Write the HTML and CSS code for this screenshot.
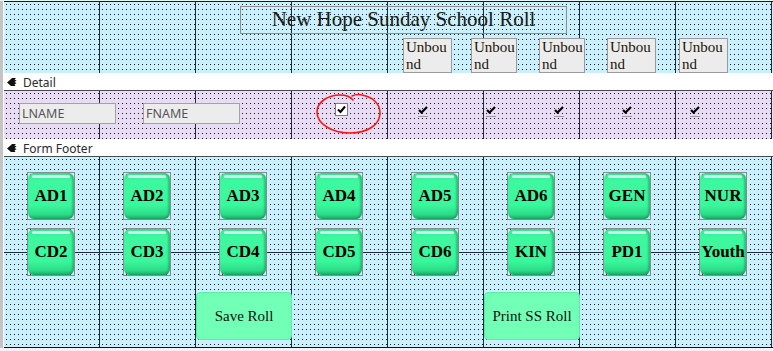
FILE: index.html
```html
<!DOCTYPE html>
<html lang="en">
<head>
    <meta charset="UTF-8">
    <meta name="viewport" content="width=device-width, initial-scale=1.0">
    <title>New Hope Sunday School Roll - Design View</title>
    <link rel="stylesheet" href="styles.css">
</head>
<body>
    <div class="form">
        <section class="sec header">
            <div class="title">New Hope Sunday School Roll</div>
            <div class="unbound-row">
                <div class="unbound">Unbound</div>
                <div class="unbound narrow">Unbound</div>
                <div class="unbound narrow">Unbound</div>
                <div class="unbound">Unbound</div>
                <div class="unbound last">Unbound</div>
            </div>
        </section>

        <div class="bar">
            <svg class="bar-icon" width="10" height="9" viewBox="0 0 10 9"><path d="M0 4.5 L4 1 L5 0 L9 0 L7.5 1.5 L9.5 2.5 L7.5 4 L9.5 5 L7.5 6.5 L8.5 8 L4 8 Z" fill="#111"/></svg>
            <span>Detail</span>
        </div>

        <section class="sec detail">
            <div class="field lname">LNAME</div>
            <div class="field fname">FNAME</div>
            <div class="checkbox">
                <svg width="11" height="11" viewBox="0 0 11 11"><path d="M2 5.5 L4.5 8 L9 2.5" fill="none" stroke="#000" stroke-width="2"/></svg>
            </div>
            <div class="checks">
                <div class="check"><svg width="10" height="8" viewBox="0 0 10 8"><path d="M1 4 L3.5 6.5 L9 1" fill="none" stroke="#000" stroke-width="2.2"/></svg></div>
                <div class="check"><svg width="10" height="8" viewBox="0 0 10 8"><path d="M1 4 L3.5 6.5 L9 1" fill="none" stroke="#000" stroke-width="2.2"/></svg></div>
                <div class="check"><svg width="10" height="8" viewBox="0 0 10 8"><path d="M1 4 L3.5 6.5 L9 1" fill="none" stroke="#000" stroke-width="2.2"/></svg></div>
                <div class="check"><svg width="10" height="8" viewBox="0 0 10 8"><path d="M1 4 L3.5 6.5 L9 1" fill="none" stroke="#000" stroke-width="2.2"/></svg></div>
                <div class="check"><svg width="10" height="8" viewBox="0 0 10 8"><path d="M1 4 L3.5 6.5 L9 1" fill="none" stroke="#000" stroke-width="2.2"/></svg></div>
            </div>
            <svg class="scribble" width="74" height="46" viewBox="0 0 74 46">
                <path d="M41 9 C38 5 34 4 28 4 C16 4 5 11 5 21 C5 33 20 42 38 42 C55 42 68 34 68 22 C68 12 60 6 50 4 C46 3 42 4 40 5" fill="none" stroke="#ff1414" stroke-width="1.6" stroke-linecap="round"/>
            </svg>
        </section>

        <div class="bar">
            <svg class="bar-icon" width="10" height="9" viewBox="0 0 10 9"><path d="M0 4.5 L4 1 L5 0 L9 0 L7.5 1.5 L9.5 2.5 L7.5 4 L9.5 5 L7.5 6.5 L8.5 8 L4 8 Z" fill="#111"/></svg>
            <span>Form Footer</span>
        </div>

        <section class="sec footer">
            <button class="btn"><span>AD1</span></button>
            <button class="btn"><span>AD2</span></button>
            <button class="btn"><span>AD3</span></button>
            <button class="btn"><span>AD4</span></button>
            <button class="btn"><span>AD5</span></button>
            <button class="btn"><span>AD6</span></button>
            <button class="btn"><span>GEN</span></button>
            <button class="btn"><span>NUR</span></button>
            <button class="btn"><span>CD2</span></button>
            <button class="btn"><span>CD3</span></button>
            <button class="btn"><span>CD4</span></button>
            <button class="btn"><span>CD5</span></button>
            <button class="btn"><span>CD6</span></button>
            <button class="btn"><span>KIN</span></button>
            <button class="btn"><span>PD1</span></button>
            <button class="btn"><span>Youth</span></button>
            <button class="cmd save">Save Roll</button>
            <button class="cmd print">Print SS Roll</button>
        </section>
    </div>
</body>
</html>
```

FILE: styles.css
```css
* {
    margin: 0;
    padding: 0;
    box-sizing: border-box;
}
body {
    width: 773px;
    height: 351px;
    overflow: hidden;
    background: #eef3f7;
    font-family: 'Liberation Serif', serif;
    color: #111;
}
.form {
    margin-top: 1px;
    border-left: 3px solid #c4c4c4;
    padding-left: 1px;
    background: #fff;
}

/* design surface: dots + inch lines */
.sec {
    position: relative;
    background-color: #c9f0fc;
    background-image:
        linear-gradient(to right, transparent 95px, #1d2c3a 95px),
        linear-gradient(to bottom, transparent 95px, #1d2c3a 95px),
        conic-gradient(at 1px 1px, transparent 75%, #1a1a1a 0);
    background-size: 96px 100%, 100% 96px, 4px 5px;
    background-repeat: repeat-x, repeat-y, repeat;
    background-position: 0 0, 0 0, 2px 2px;
}
.header {
    height: 72px;
    border-top: 1px solid #1a1a1a;
}
.detail {
    height: 48px;
    background-color: #e7dcf4;
    display: flex;
    align-items: flex-start;
}
.footer {
    height: 191px;
    border-bottom: 1px solid #111;
    display: grid;
    grid-template-columns: repeat(8, 96px);
    grid-auto-rows: 48px;
    row-gap: 8px;
    padding-top: 15px;
    align-content: start;
}

/* section bars */
.bar {
    height: 18px;
    background: #fff;
    border-bottom: 1px solid #4a4a4a;
    display: flex;
    align-items: center;
    gap: 6px;
    padding: 1px 0 0 3px;
    font-family: 'Noto Sans', sans-serif;
    font-size: 12px;
    color: #2a2a2a;
}
.bar-icon {
    display: block;
}

/* header */
.title {
    margin: 4px 0 0 236px;
    width: 327px;
    height: 28px;
    border: 1px solid #8e8e8e;
    text-align: center;
    font-size: 21px;
    line-height: 25px;
    color: #1a1a1a;
}
.unbound-row {
    display: flex;
    gap: 19px;
    margin-top: 4px;
    padding-left: 399px;
}
.unbound {
    width: 49px;
    height: 35px;
    background: #ececec;
    border: 1px solid #9a9a9a;
    padding-left: 2px;
    font-size: 15px;
    line-height: 17px;
    word-break: break-all;
    overflow: hidden;
    color: #1a1408;
}
.unbound.narrow {
    width: 46px;
    margin-right: 3px;
}
.unbound.last {
    margin-left: 4px;
}

/* detail */
.field {
    width: 97px;
    height: 21px;
    margin-top: 12px;
    background: #ececec;
    border: 1px solid #a2a2a2;
    padding-left: 2px;
    font-family: 'Noto Sans', sans-serif;
    font-size: 12.5px;
    line-height: 19px;
    color: #555;
}
.lname {
    margin-left: 15px;
}
.fname {
    margin-left: 27px;
}
.checkbox {
    width: 13px;
    height: 13px;
    margin: 12px 0 0 95px;
    background: #fff;
    border: 1px solid #7c7c7c;
    display: flex;
    align-items: center;
    justify-content: center;
}
.checks {
    display: flex;
    gap: 58px;
    margin: 15px 0 0 70px;
}
.check {
    width: 10px;
    height: 11px;
    border-bottom: 1px solid #9c9c9c;
}
.check svg {
    display: block;
}
.scribble {
    position: absolute;
    left: 308px;
    top: 0;
}

/* footer buttons */
.btn {
    width: 48px;
    height: 48px;
    margin-left: 23px;
    border: 1px solid #8a8a8a;
    background: transparent;
    font-family: 'Liberation Serif', serif;
    cursor: pointer;
}
.btn span {
    position: relative;
    display: flex;
    align-items: center;
    justify-content: center;
    width: 100%;
    height: 100%;
    border-radius: 6px;
    background: linear-gradient(180deg, #36e592 0, #3ef89f 8px, #3af79c 70%, #2cdc89 90%, #1aa864 100%);
    box-shadow: inset -2px 0 2px rgba(0, 100, 55, 0.35);
    font-size: 17px;
    font-weight: bold;
    color: #000;
    white-space: nowrap;
}
.btn span::before {
    content: '';
    position: absolute;
    top: 2px;
    left: 4px;
    right: 4px;
    height: 3px;
    border-radius: 2px;
    background: #c6ffe8;
}
.cmd {
    height: 48px;
    margin-top: 8px;
    background: #72ffb6;
    border: 1px solid #55ee9f;
    border-radius: 4px;
    font-family: 'Liberation Serif', serif;
    font-size: 15px;
    color: #111;
    cursor: pointer;
}
.save {
    grid-column: 3;
}
.print {
    grid-column: 6;
}
```
